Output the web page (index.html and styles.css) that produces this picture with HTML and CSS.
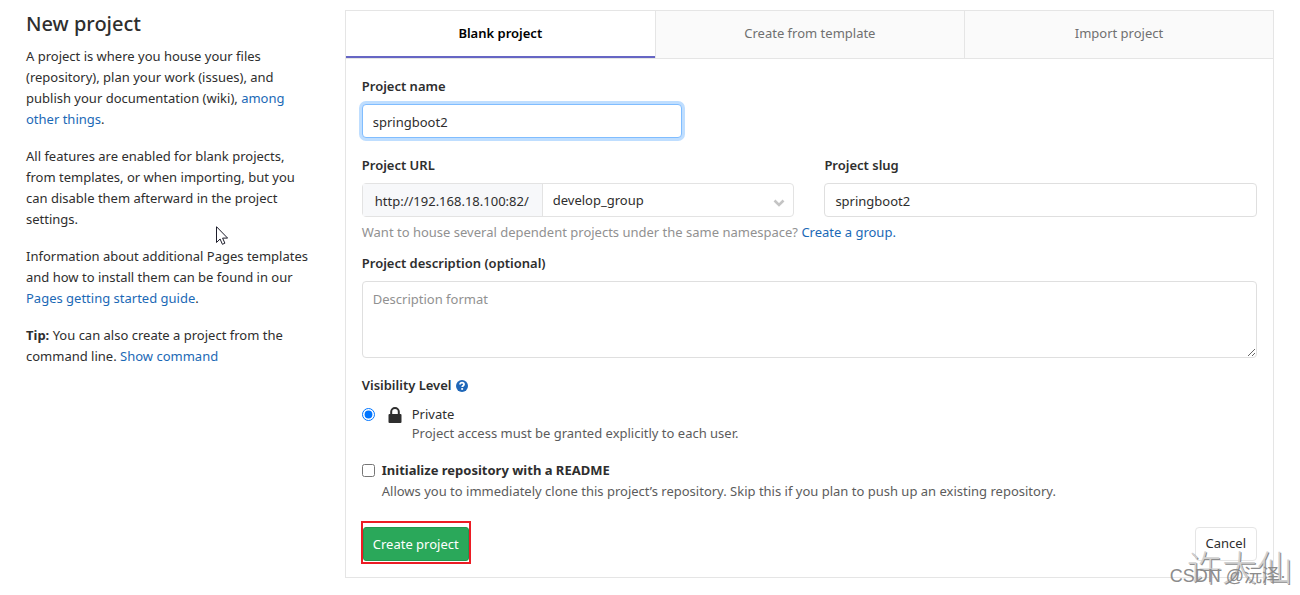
FILE: index.html
```
<!DOCTYPE html>
<html lang="en">
<head>
<meta charset="utf-8">
<title>New project</title>
<link rel="stylesheet" href="styles.css">
</head>
<body>
<div class="page">
  <aside class="intro">
    <h1 class="intro-title">New project</h1>
    <p>A project is where you house your files (repository), plan your work (issues), and publish your documentation (wiki), <a href="#">among other things</a>.</p>
    <p>All features are enabled for blank projects, from templates, or when importing, but you can disable them afterward in the project settings.</p>
    <p>Information about additional Pages templates and how to install them can be found in our <a href="#">Pages getting started guide</a>.</p>
    <p><strong>Tip:</strong> You can also create a project from the command line. <a href="#">Show command</a></p>
  </aside>
  <main class="main">
    <div class="panel">
      <nav class="tabs">
        <a class="tab tab-active" href="#">Blank project</a>
        <a class="tab" href="#">Create from template</a>
        <a class="tab" href="#">Import project</a>
      </nav>
      <form class="form">
        <div class="field field-name">
          <label class="label" for="name">Project name</label>
          <input class="control control-focus" id="name" type="text" value="springboot2">
        </div>
        <div class="columns">
          <div class="field">
            <label class="label" for="namespace">Project URL</label>
            <div class="url-group">
              <span class="url-prefix">http://192.168.18.100:82/</span>
              <div class="select-wrap">
                <select class="select" id="namespace"><option>develop_group</option></select>
                <svg class="chevron" viewBox="0 0 12 8" aria-hidden="true"><path d="M1.5 1.5 6 6 10.5 1.5" fill="none" stroke="#c4c4c4" stroke-width="2.6"/></svg>
              </div>
            </div>
          </div>
          <div class="field">
            <label class="label" for="slug">Project slug</label>
            <input class="control" id="slug" type="text" value="springboot2">
          </div>
        </div>
        <p class="hint">Want to house several dependent projects under the same namespace? <a href="#">Create a group.</a></p>
        <div class="field">
          <label class="label" for="description">Project description (optional)</label>
          <textarea class="control textarea" id="description" placeholder="Description format"></textarea>
        </div>
        <div class="visibility">
          <div class="label visibility-label">Visibility Level
            <a class="help" href="#" aria-label="Help"><svg viewBox="0 0 12 12"><circle cx="6" cy="6" r="6" fill="#1f67b8"/><path d="M4 4.6C4 3.2 4.9 2.6 6 2.6s2 .7 2 1.8c0 1.3-1.8 1.4-1.8 2.7" fill="none" stroke="#fff" stroke-width="1.8"/><path d="M5.2 8.1h1.9v1.7H5.2z" fill="#fff"/></svg></a>
          </div>
          <div class="option">
            <input class="tick" id="private" type="radio" name="visibility" checked>
            <label class="private" for="private">
              <svg class="lock" viewBox="0 0 14 16" aria-hidden="true"><path d="M3.2 8V4.8a3.8 3.8 0 0 1 7.6 0V8" fill="none" stroke="#2e2e2e" stroke-width="2"/><rect x="0.5" y="7" width="13" height="9" rx="1" fill="#2e2e2e"/></svg>
              Private
            </label>
          </div>
          <p class="note note-private">Project access must be granted explicitly to each user.</p>
        </div>
        <div class="readme">
          <div class="option">
            <input class="tick" id="readme" type="checkbox">
            <label class="readme-label" for="readme">Initialize repository with a README</label>
          </div>
          <p class="note note-readme">Allows you to immediately clone this project’s repository. Skip this if you plan to push up an existing repository.</p>
        </div>
        <div class="actions">
          <span class="highlight"><button class="button button-create" type="button">Create project</button></span>
          <button class="button button-cancel" type="button">Cancel</button>
        </div>
      </form>
    </div>
  </main>
</div>
<svg class="cursor" viewBox="0 0 12 19" aria-hidden="true"><path d="M.5.7v15.8l3.6-3.5 2.3 5.3 2.5-1.1-2.3-5.1h5z" fill="#fff" stroke="#1d1d2b"/></svg>
<div class="watermark watermark-large">许大仙</div>
<div class="watermark watermark-small">CSDN @沅泽·</div>
</body>
</html>
```
FILE: styles.css
```
* { box-sizing: border-box; }
body {
  margin: 0;
  position: relative;
  min-height: 100vh;
  background: #fff;
  color: #2e2e2e;
  font: 13px/21px "Noto Sans", "Noto Sans CJK SC", sans-serif;
}
p { margin: 0; }
a { color: #1b69b6; text-decoration: none; }
input, select, textarea, button { font: inherit; color: inherit; margin: 0; }

.page {
  display: grid;
  grid-template-columns: minmax(0, 1fr) minmax(0, 3fr);
  padding: 10px 11px 0 10px;
}
.intro { padding: 0 15px 0 16px; }
.intro p { margin-bottom: 16px; }
.intro-title { margin: 0 0 8px; font-size: 20px; line-height: 28px; font-weight: 500; }
.main { padding: 0 15px; }

.panel { border: 1px solid #e5e5e5; }
.tabs { display: grid; grid-template-columns: repeat(3, 1fr); border-bottom: 1px solid #e5e5e5; }
.tab {
  height: 47px;
  padding-top: 12px;
  text-align: center;
  color: #707070;
  background: #fafafa;
  border-left: 1px solid #e5e5e5;
}
.tab-active {
  color: #000;
  font-weight: 600;
  background: #fff;
  border-left: 0;
  border-bottom: 2px solid #6666c4;
}

.form { padding: 17px 16px 13px; }
.label { display: block; margin-bottom: 7px; font-weight: 600; }
.control {
  display: block;
  width: 100%;
  height: 34px;
  padding: 7px 10px 5px;
  background: #fff;
  border: 1px solid #dfdfdf;
  border-radius: 4px;
  outline: 0;
}
.field-name { width: 320px; margin-bottom: 17px; }
.control-focus { border-color: #80bdff; box-shadow: 0 0 0 3px #bfdeff; }
.columns { display: grid; grid-template-columns: 1fr 1fr; gap: 30px; }
.url-group { display: flex; height: 34px; border: 1px solid #e3e3e3; border-radius: 4px; }
.url-prefix { padding: 7px 13px 0 12px; background: #f7f8fa; border-right: 1px solid #e3e3e3; }
.select-wrap { position: relative; flex: 1; }
.select { width: 100%; height: 32px; padding: 0 10px; border: 0; background: none; appearance: none; outline: 0; }
.chevron { position: absolute; right: 8px; top: 15px; width: 12px; height: 8px; }
.hint { margin: 5px 0 10px; color: #919191; }
.textarea { height: 77px; resize: vertical; }
.textarea::placeholder { color: #919191; }

.visibility { margin-top: 17px; }
.visibility-label { display: flex; align-items: center; gap: 4px; margin-bottom: 8px; }
.help, .help svg { display: block; width: 12px; height: 12px; }
.option { display: flex; align-items: center; }
.tick { width: 13px; height: 13px; flex: none; }
.private { display: flex; align-items: center; gap: 10px; margin-left: 13px; }
.lock { width: 14px; height: 16px; }
.note { color: #5c5c5c; }
.note-private { margin: -2px 0 0 50px; }
.readme { margin-top: 16px; }
.readme-label { margin-left: 7px; font-weight: 700; }
.note-readme { margin-left: 20px; }

.actions { display: flex; justify-content: space-between; align-items: center; margin-top: 19px; }
.highlight { margin-left: -1px; padding: 4px 0 1px; border: 2px solid #ec1c24; }
.button { display: block; height: 34px; padding: 0 10px; border-radius: 4px; border: 1px solid #e5e5e5; background: #fff; }
.button-create { padding: 0 9px; color: #fff; background: #2aa85a; border-color: #24964e; border-radius: 3px; }
.button-cancel { margin-top: 2px; }

.cursor { position: absolute; left: 216px; top: 226px; width: 12px; height: 19px; }
.watermark { position: absolute; white-space: nowrap; pointer-events: none; }
.watermark-large { right: 8px; bottom: 6px; font-size: 35px; line-height: 42px; font-weight: 300; color: #d0d0d0; text-shadow: 1px 1px 0 #8c8c8c; }
.watermark-small { right: 14px; bottom: 8px; font-size: 18px; line-height: 22px; font-family: "Liberation Sans", "Noto Sans CJK SC", sans-serif; color: #8c8c8c; }
```
